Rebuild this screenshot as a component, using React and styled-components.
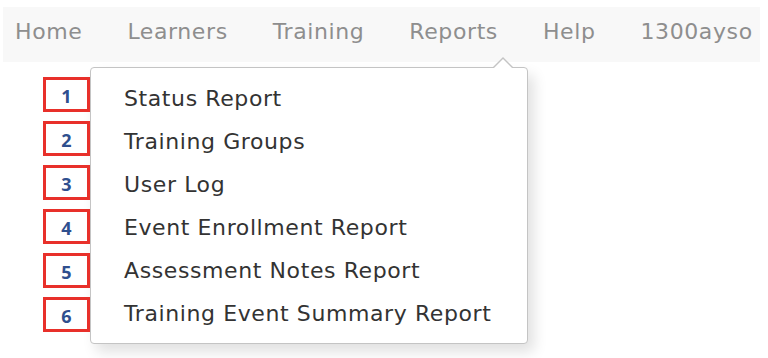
import React from "react";
import styled, { createGlobalStyle } from "styled-components";

const navItems = ["Home", "Learners", "Training", "Reports", "Help", "1300ayso"];
const reports = [
  "Status Report",
  "Training Groups",
  "User Log",
  "Event Enrollment Report",
  "Assessment Notes Report",
  "Training Event Summary Report",
];

export default function App() {
  return (
    <>
      <GlobalStyle />
      <Page>
        <NavBar>
          {navItems.map((item) => (
            <NavItem key={item}>{item}</NavItem>
          ))}
        </NavBar>
        <Body>
          <Badges>
            {reports.map((r, i) => (
              <Badge key={r}>{i + 1}</Badge>
            ))}
          </Badges>
          <Menu>
            {reports.map((r) => (
              <MenuItem key={r}>{r}</MenuItem>
            ))}
          </Menu>
        </Body>
      </Page>
    </>
  );
}

const GlobalStyle = createGlobalStyle`
  html, body {
    margin: 0;
    background: #fff;
  }
  body {
    font-family: "DejaVu Sans", "Open Sans", sans-serif;
  }
`;

const Page = styled.div`
  width: 768px;
  height: 358px;
  padding: 7px 8px 0 3px;
  box-sizing: border-box;
  overflow: hidden;
`;

const NavBar = styled.nav`
  height: 55px;
  background: #f8f8f8;
  display: flex;
  align-items: center;
  gap: 45px;
  padding: 0 0 7px 12px;
  box-sizing: border-box;
`;

const NavItem = styled.span`
  font-size: 22px;
  letter-spacing: 0.6px;
  color: #8e8e8e;
  white-space: nowrap;
`;

const Body = styled.div`
  display: flex;
  align-items: flex-start;
  padding-left: 40px;
  margin-top: 5px;
`;

const Badges = styled.div`
  display: flex;
  flex-direction: column;
  gap: 9px;
  margin-top: 10px;
  position: relative;
  z-index: 1;
`;

const Badge = styled.div`
  width: 47px;
  height: 35px;
  box-sizing: border-box;
  border: 3px solid #e8302a;
  background: #fff;
  display: flex;
  align-items: center;
  justify-content: center;
  padding-top: 2px;
  font-family: "Open Sans", "Liberation Sans", sans-serif;
  font-weight: 700;
  font-size: 18px;
  color: #2f4f8e;
`;

const Menu = styled.div`
  position: relative;
  width: 438px;
  box-sizing: border-box;
  padding: 9px 0 8px 33px;
  background: #fff;
  border: 1px solid #c4c4c4;
  border-radius: 4px;
  box-shadow: 6px 8px 14px rgba(0, 0, 0, 0.12);

  &::before,
  &::after {
    content: "";
    position: absolute;
    left: 402px;
    width: 0;
    height: 0;
    border-left: 10px solid transparent;
    border-right: 10px solid transparent;
  }
  &::before {
    top: -11px;
    border-bottom: 10px solid #c4c4c4;
  }
  &::after {
    top: -9px;
    left: 403px;
    border-left-width: 9px;
    border-right-width: 9px;
    border-bottom: 9px solid #fff;
  }
`;

const MenuItem = styled.div`
  height: 43px;
  display: flex;
  align-items: center;
  font-size: 22px;
  letter-spacing: 0.6px;
  color: #333;
  white-space: nowrap;
`;
